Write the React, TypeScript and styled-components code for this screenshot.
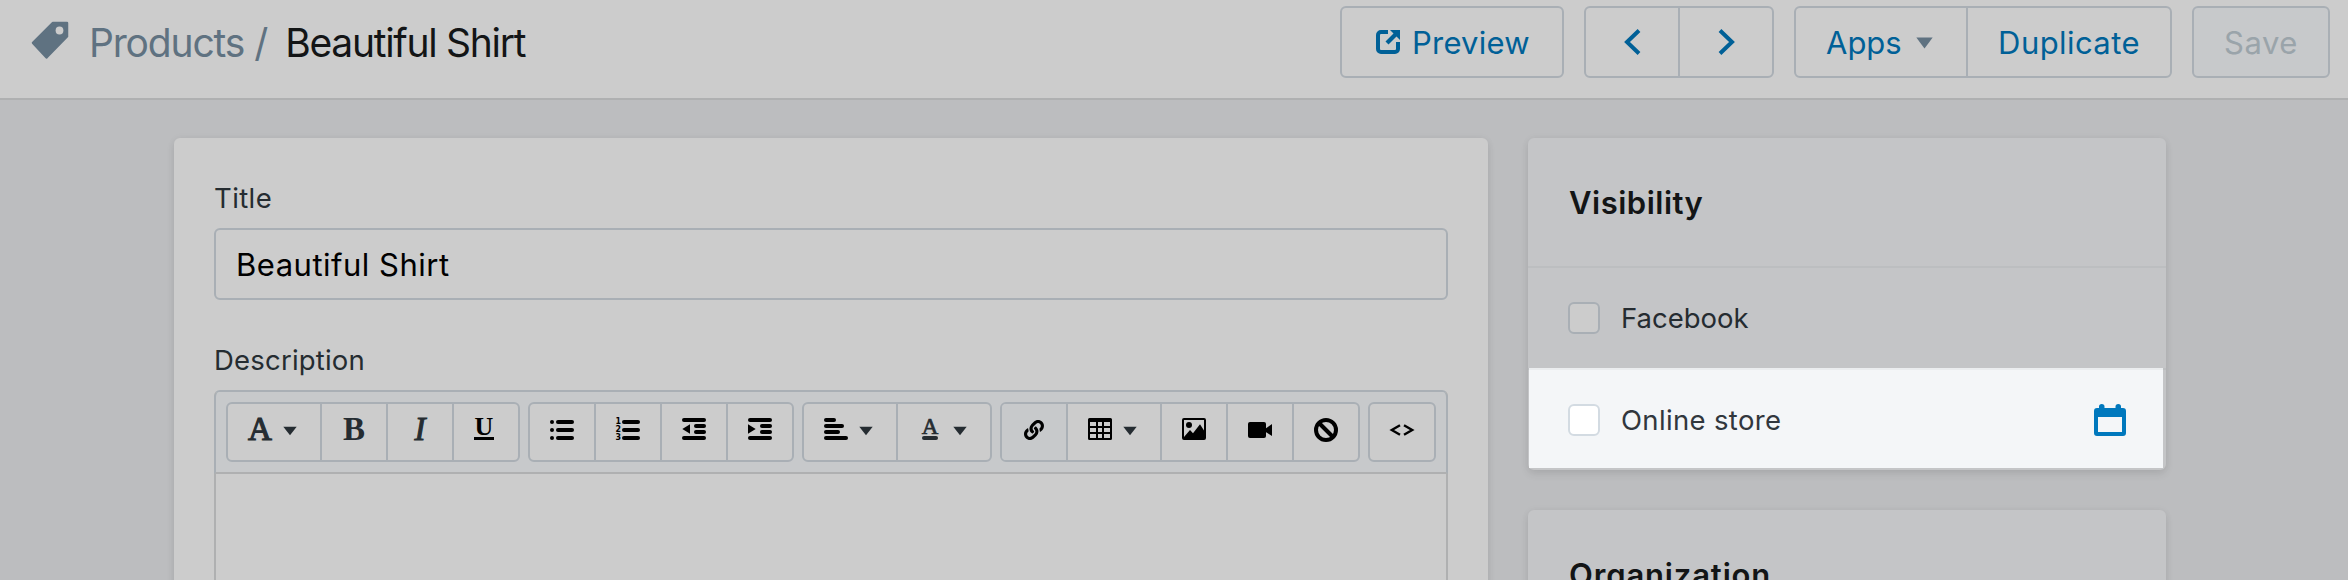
import React from 'react';
import styled, { createGlobalStyle, css } from 'styled-components';
import { FaLink } from 'react-icons/fa';

const color = {
  page: '#bcbdbf',
  card: '#cccccc',
  subdued: '#c4c5c7',
  toolbar: '#c7c9cb',
  border: '#a9afb5',
  link: '#006097',
  slate: '#5f7281',
  ink: '#252c31',
  heading: '#131516',
};

const GlobalStyle = createGlobalStyle`
  *, *::before, *::after { box-sizing: border-box; }
  body { margin: 0; background: ${color.page}; }
  svg { display: block; flex: none; overflow: visible; }
`;

const Page = styled.div`
  height: 580px;
  overflow: hidden;
  background: ${color.page};
  font-family: Inter, 'Liberation Sans', sans-serif;
  color: ${color.ink};
`;

const Header = styled.header`
  display: flex;
  align-items: center;
  justify-content: space-between;
  height: 100px;
  padding: 6px 18px 20px 31px;
  background: ${color.card};
  border-bottom: 2px solid #afb0b1;
`;

const Breadcrumb = styled.h1`
  display: flex;
  align-items: center;
  margin: 0;
  font-size: 39px;
  font-weight: 400;
  line-height: 47px;
  white-space: nowrap;
  color: ${color.heading};
`;

const TagIcon = styled.svg`
  margin: 0 21px 4px 0;
`;

const Section = styled.span`
  color: ${color.slate};
  letter-spacing: -1.16px;
`;

const Slash = styled.span`
  margin: 0 17px 0 10px;
  color: ${color.slate};
`;

const Current = styled.span`
  letter-spacing: -1.3px;
`;

const Actions = styled.div`
  display: flex;
  gap: 20px;
`;

const Group = styled.div<{ $disabled?: boolean }>`
  display: flex;
  height: 72px;
  border: 2px solid ${color.border};
  border-radius: 6px;
  background: ${p => (p.$disabled ? '#c7c9cb' : 'transparent')};

  && > * + * {
    border-left: 2px solid ${color.border};
  }
`;

const Button = styled.button<{ $width: number; $inset?: number; $tracking?: number }>`
  display: flex;
  align-items: center;
  justify-content: ${p => (p.$inset ? 'flex-start' : 'center')};
  box-sizing: content-box;
  width: ${p => p.$width - (p.$inset || 0)}px;
  padding: 0 0 0 ${p => p.$inset || 0}px;
  border: 0;
  background: none;
  font: 400 31px/38px Inter, 'Liberation Sans', sans-serif;
  letter-spacing: ${p => p.$tracking || 0}px;
  white-space: nowrap;
  color: ${color.link};

  &:disabled {
    color: #9aa4aa;
  }
`;

const ButtonText = styled.span<{ $before?: number; $after?: number }>`
  margin: 0 ${p => p.$after || 0}px 0 ${p => p.$before || 0}px;
  padding-top: 2px;
`;

const Columns = styled.main`
  display: flex;
  align-items: flex-start;
  gap: 40px;
  padding: 38px 0 0 174px;
`;

const raised = css`
  border-radius: 6px;
  box-shadow: 0 4px 8px rgba(0, 0, 0, 0.09), 0 0 10px rgba(0, 0, 0, 0.03);
`;

const Card = styled.section`
  width: 1314px;
  height: 520px;
  padding: 40px 40px 0;
  background: ${color.card};
  ${raised}
`;

const Label = styled.label<{ $tracking: number }>`
  display: block;
  margin-bottom: 10px;
  font-size: 27.5px;
  line-height: 40px;
  letter-spacing: ${p => p.$tracking}px;
`;

const Input = styled.input`
  display: block;
  width: 100%;
  height: 72px;
  margin-bottom: 40px;
  padding: 0 20px;
  border: 2px solid ${color.border};
  border-radius: 6px;
  outline: 0;
  background: transparent;
  font: 400 31px/38px Inter, 'Liberation Sans', sans-serif;
  letter-spacing: 0.5px;
  color: #000;
`;

const Editor = styled.div`
  height: 300px;
  border: 2px solid #afb0b1;
  border-top-color: ${color.border};
  border-radius: 6px;
`;

const Toolbar = styled.div`
  display: flex;
  gap: 8px;
  height: 82px;
  margin: 0 -2px;
  padding: 10px;
  border: solid ${color.border};
  border-width: 0 2px;
  border-bottom: 2px solid #afb0b1;
  border-radius: 5px 5px 0 0;
  background: ${color.toolbar};
`;

const ToolGroup = styled.div`
  display: flex;
  height: 60px;
  border: 2px solid ${color.border};
  border-radius: 6px;
  background: ${color.card};

  && > * + * {
    border-left: 2px solid ${color.border};
  }
`;

const Tool = styled.button<{ $menu?: boolean; $inactive?: boolean }>`
  display: flex;
  align-items: flex-start;
  box-sizing: content-box;
  width: ${p => (p.$menu ? 72 : 44)}px;
  height: 42px;
  padding: 14px 0 0 20px;
  border: 0;
  background: ${p => (p.$inactive ? color.toolbar : 'transparent')};
  color: #000;

  &:first-child {
    border-radius: 4px 0 0 4px;
  }
`;

const Letter = styled.span<{ $size?: number; $weight?: number; $italic?: boolean; $stroke?: number }>`
  display: block;
  width: 24px;
  height: 22px;
  font-family: 'Liberation Serif', serif;
  font-size: ${p => p.$size || 33}px;
  font-weight: ${p => p.$weight || 700};
  font-style: ${p => (p.$italic ? 'italic' : 'normal')};
  line-height: 23px;
  text-align: center;
  color: ${color.ink};
  -webkit-text-stroke: ${p => p.$stroke || 0}px currentColor;
`;

const RuledLetter = styled(Letter)<{ $rule: number; $width: number; $tone: string }>`
  width: ${p => p.$width}px;
  line-height: 17px;
  color: ${p => p.$tone};

  &::after {
    content: '';
    display: block;
    width: ${p => (p.$rule > 3 ? 16 : 20)}px;
    height: ${p => p.$rule}px;
    margin: ${p => (p.$rule > 3 ? 1 : 2)}px auto 0;
    border-radius: ${p => (p.$rule > 3 ? 2 : 0)}px;
    background: ${p => p.$tone};
  }
`;

const ToolCaret = styled.svg`
  margin: 8px 0 0 11px;
`;

const ToolLink = styled(FaLink)`
  width: 20px;
  height: 20px;
  margin: 2px;
`;

const Sidebar = styled.aside`
  display: flex;
  flex-direction: column;
  gap: 40px;
  width: 638px;
`;

const Panel = styled.section`
  background: ${color.subdued};
  ${raised}
`;

const PanelTitle = styled.h2<{ $tracking: number }>`
  margin: 0;
  padding: 1px 41px 0;
  font-size: 31px;
  font-weight: 600;
  line-height: 127px;
  letter-spacing: ${p => p.$tracking}px;
  color: ${color.heading};
`;

const Channel = styled.div`
  height: 102px;
  border-top: 2px solid #bcbec0;

  &:last-child {
    height: 102px;
  }
`;

const ChannelRow = styled.label<{ $spotlit?: boolean }>`
  display: flex;
  align-items: center;
  height: 100px;
  padding: 0 40px;
  font-size: 27.5px;
  line-height: 34px;

  ${p =>
    p.$spotlit &&
    css`
      margin: -2px 3px 0 1px;
      padding: 2px 37px 0 39px;
      border-top: 2px solid #ebedef;
      background: #f4f6f8;
      color: #31373d;
    `}
`;

const Checkbox = styled.span<{ $spotlit?: boolean }>`
  width: 32px;
  height: 32px;
  margin-right: 21px;
  border: 2px solid ${p => (p.$spotlit ? '#d3dbe2' : color.border)};
  border-radius: 6px;
  background: ${p => (p.$spotlit ? '#fff' : color.card)};
`;

const ChannelName = styled.span<{ $tracking?: number }>`
  flex: 1;
  letter-spacing: ${p => p.$tracking || 0}px;
`;

const Icon24 = ({ children }: { children: React.ReactNode }) => (
  <svg width="24" height="24" viewBox="0 0 24 24" fill="currentColor">{children}</svg>
);

const Bar = ({ x = 0, y, w }: { x?: number; y: number; w: number }) => (
  <rect x={x} y={y} width={w} height="4" rx="2" />
);

const Caret = () => (
  <ToolCaret width="14" height="10" viewBox="0 0 14 10">
    <path d="M0.3 0.7H13.7L7 9.3z" fill={color.ink} />
  </ToolCaret>
);

const Chevron = ({ right }: { right?: boolean }) => (
  <svg width="17" height="26" viewBox="0 0 17 26" fill="none" stroke="currentColor" strokeWidth="4">
    <path d={right ? 'M2 1.5L14 13L2 24.5' : 'M15 1.5L3 13L15 24.5'} />
  </svg>
);

export default function App() {
  return (
    <Page>
      <GlobalStyle />
      <Header>
        <Breadcrumb>
          <TagIcon width="37" height="38" viewBox="0 0 37 38">
            <path
              d="M2 22L15.500 36.500L36 15.500V2H22z"
              fill={color.slate}
              stroke={color.slate}
              strokeWidth="2.500"
              strokeLinejoin="round"
            />
            <circle cx="28.500" cy="9.500" r="3.900" fill={color.card} />
          </TagIcon>
          <Section>Products</Section>
          <Slash>/</Slash>
          <Current>Beautiful Shirt</Current>
        </Breadcrumb>
        <Actions>
          <Group>
            <Button $width={220} $inset={34} $tracking={0.23}>
              <Icon24>
                <path d="M12 2H5a3 3 0 0 0-3 3v14a3 3 0 0 0 3 3h14a3 3 0 0 0 3-3v-7" fill="none" stroke="currentColor" strokeWidth="4" />
                <path d="M11 13L20 4" stroke="currentColor" strokeWidth="4.200" />
                <path d="M14 0H24V10z" />
              </Icon24>
              <ButtonText $before={12}>Preview</ButtonText>
            </Button>
          </Group>
          <Group>
            <Button $width={92}><Chevron /></Button>
            <Button $width={92}><Chevron right /></Button>
          </Group>
          <Group>
            <Button $width={170} $inset={30}>
              <ButtonText $after={14}>Apps</ButtonText>
              <svg width="17" height="12" viewBox="0 0 17 12">
                <path d="M0.300 1.500H16.700L8.500 12.500z" fill={color.slate} />
              </svg>
            </Button>
            <Button $width={202} $tracking={0.42}><ButtonText>Duplicate</ButtonText></Button>
          </Group>
          <Group $disabled>
            <Button $width={134} $tracking={0.55} disabled><ButtonText>Save</ButtonText></Button>
          </Group>
        </Actions>
      </Header>

      <Columns>
        <Card>
          <Label $tracking={0.4} htmlFor="title">Title</Label>
          <Input id="title" defaultValue="Beautiful Shirt" />
          <Label $tracking={0.2}>Description</Label>
          <Editor>
            <Toolbar>
              <ToolGroup>
                <Tool $menu><Letter $weight={400} $stroke={1.2}>A</Letter><Caret /></Tool>
                <Tool><Letter>B</Letter></Tool>
                <Tool><Letter $italic $weight={400} $stroke={1}>I</Letter></Tool>
                <Tool><RuledLetter $size={26} $rule={3} $width={20} $tone="#000">U</RuledLetter></Tool>
              </ToolGroup>
              <ToolGroup>
                <Tool>
                  <Icon24>
                    {[2, 10, 18].map(y => (
                      <g key={y}>
                        <circle cx="2" cy={y + 2} r="2" />
                        <Bar x={6} y={y} w={18} />
                      </g>
                    ))}
                  </Icon24>
                </Tool>
                <Tool>
                  <Icon24>
                    {[2, 10, 18].map((y, i) => (
                      <g key={y}>
                        <text x="-0.500" y={y + 4.2} fontFamily="'DejaVu Sans', sans-serif" fontWeight="700" fontSize="8.500" textLength="5.500" lengthAdjust="spacingAndGlyphs">{i + 1}</text>
                        <Bar x={6} y={y} w={18} />
                      </g>
                    ))}
                  </Icon24>
                </Tool>
                <Tool>
                  <Icon24>
                    <Bar y={0} w={24} /><Bar x={12} y={6} w={12} /><Bar x={12} y={12} w={12} /><Bar y={18} w={24} />
                    <path d="M0.300 11L8 6.200V15.800z" />
                  </Icon24>
                </Tool>
                <Tool>
                  <Icon24>
                    <Bar y={0} w={24} /><Bar x={12} y={6} w={12} /><Bar x={12} y={12} w={12} /><Bar y={18} w={24} />
                    <path d="M7.700 11L0 6.200V15.800z" />
                  </Icon24>
                </Tool>
              </ToolGroup>
              <ToolGroup>
                <Tool $menu>
                  <Icon24><Bar y={0} w={12} /><Bar y={6} w={20} /><Bar y={12} w={16} /><Bar y={18} w={24} /></Icon24>
                  <Caret />
                </Tool>
                <Tool $menu>
                  <RuledLetter $size={23} $weight={400} $stroke={0.7} $rule={4} $width={24} $tone={color.ink}>A</RuledLetter>
                  <Caret />
                </Tool>
              </ToolGroup>
              <ToolGroup>
                <Tool $inactive><ToolLink /></Tool>
                <Tool $menu>
                  <Icon24>
                    <path
                      fillRule="evenodd"
                      d="M1.500 0h21A1.500 1.500 0 0 1 24 1.500v19a1.500 1.500 0 0 1-1.500 1.500h-21A1.500 1.500 0 0 1 0 20.500v-19A1.500 1.500 0 0 1 1.500 0zM2 4h6v4H2zM10 4h4v4h-4zM16 4h6v4h-6zM2 10h6v4H2zM10 10h4v4h-4zM16 10h6v4h-6zM2 16h6v4H2zM10 16h4v4h-4zM16 16h6v4h-6z"
                    />
                  </Icon24>
                  <Caret />
                </Tool>
                <Tool>
                  <Icon24>
                    <rect x="1" y="1" width="22" height="20" rx="1" fill="none" stroke="currentColor" strokeWidth="2" />
                    <circle cx="7" cy="7" r="3" />
                    <path d="M2 21V19L8 12L11 15.300L18 6.300L22 12.500V21z" />
                  </Icon24>
                </Tool>
                <Tool>
                  <Icon24>
                    <rect y="4" width="18" height="16" rx="2" />
                    <path d="M17 11L24 6V18L17 13.500z" />
                  </Icon24>
                </Tool>
                <Tool>
                  <Icon24>
                    <g fill="none" stroke="currentColor" strokeWidth="4">
                      <circle cx="12" cy="12" r="10" />
                      <path d="M5 5L19 19" />
                    </g>
                  </Icon24>
                </Tool>
              </ToolGroup>
              <ToolGroup>
                <Tool>
                  <Icon24>
                    <path d="M10 7.200L1.800 12L10 16.800M14 7.200L22.200 12L14 16.800" fill="none" stroke="currentColor" strokeWidth="2.400" />
                  </Icon24>
                </Tool>
              </ToolGroup>
            </Toolbar>
          </Editor>
        </Card>

        <Sidebar>
          <Panel>
            <PanelTitle $tracking={0.5}>Visibility</PanelTitle>
            <Channel>
              <ChannelRow>
                <Checkbox />
                <ChannelName>Facebook</ChannelName>
              </ChannelRow>
            </Channel>
            <Channel>
              <ChannelRow $spotlit>
                <Checkbox $spotlit />
                <ChannelName $tracking={0.34}>Online store</ChannelName>
                <svg width="32" height="32" viewBox="0 0 32 32" fill="#0078bd">
                  <path
                    fillRule="evenodd"
                    d="M3 4H5V2.500a2.750 2.500 0 0 1 5.500 0V4H21.500V2.500a2.750 2.500 0 0 1 5.500 0V4H29a3 3 0 0 1 3 3V29a3 3 0 0 1-3 3H3a3 3 0 0 1-3-3V7a3 3 0 0 1 3-3zM4 13V28H28V13z"
                  />
                </svg>
              </ChannelRow>
            </Channel>
          </Panel>
          <Panel>
            <PanelTitle $tracking={0.85}>Organization</PanelTitle>
          </Panel>
        </Sidebar>
      </Columns>
    </Page>
  );
}
